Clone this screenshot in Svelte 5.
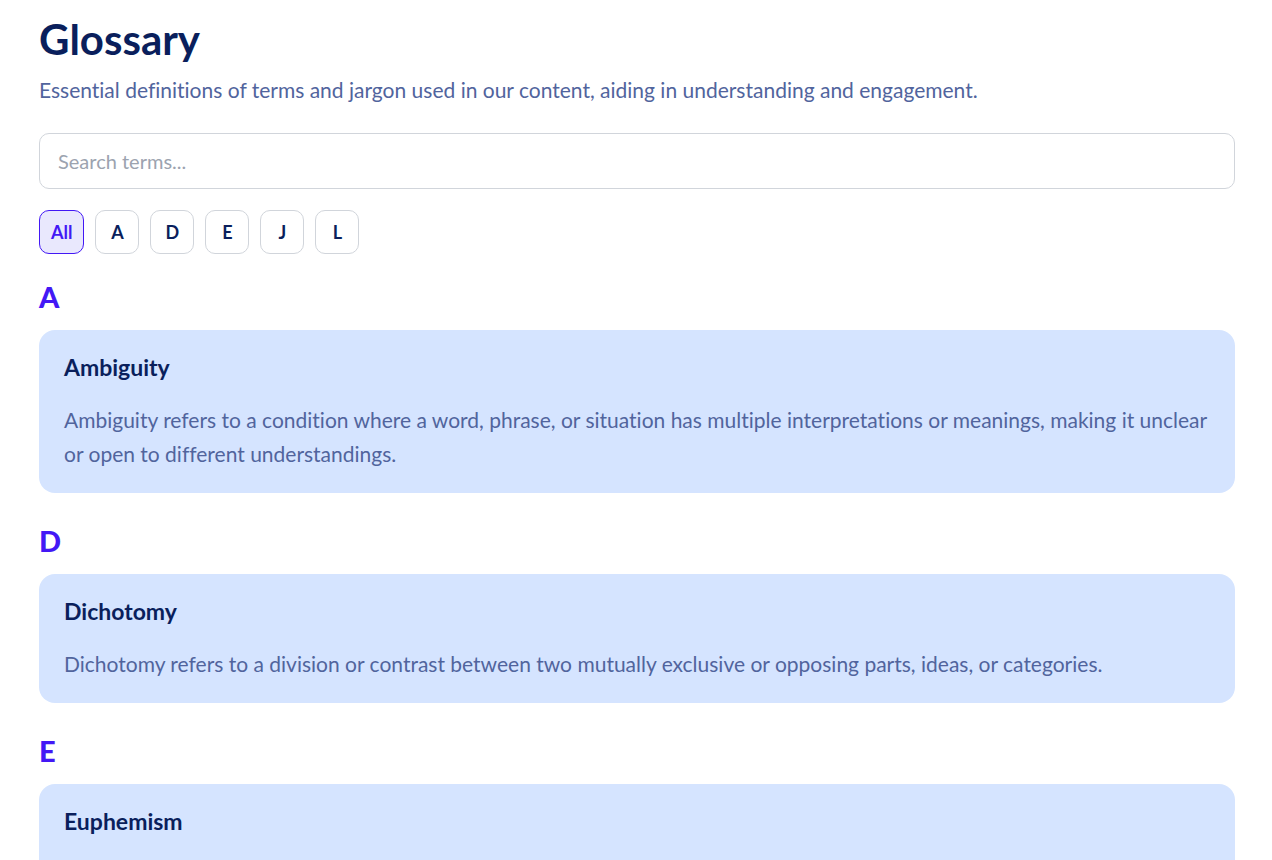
<script lang="ts">
  interface Term {
    name: string;
    definition: string;
  }

  const terms: Term[] = [
    {
      name: 'Ambiguity',
      definition:
        'Ambiguity refers to a condition where a word, phrase, or situation has multiple interpretations or meanings, making it unclear or open to different understandings.',
    },
    {
      name: 'Dichotomy',
      definition:
        'Dichotomy refers to a division or contrast between two mutually exclusive or opposing parts, ideas, or categories.',
    },
    { name: 'Euphemism', definition: '' },
  ];

  const letters = ['All', 'A', 'D', 'E', 'J', 'L'];

  let search = $state('');
  let active = $state('All');

  const groups = $derived(
    letters
      .slice(1)
      .filter((letter) => active === 'All' || active === letter)
      .map((letter) => ({
        letter,
        terms: terms.filter(
          (term) => term.name[0] === letter && term.name.toLowerCase().includes(search.trim().toLowerCase())
        ),
      }))
      .filter((group) => group.terms.length > 0)
  );
</script>

<main class="glossary">
  <h1>Glossary</h1>
  <p class="intro">Essential definitions of terms and jargon used in our content, aiding in understanding and engagement.</p>

  <input class="search" type="search" placeholder="Search terms..." aria-label="Search terms" bind:value={search} />

  <div class="filters">
    {#each letters as letter}
      <button type="button" class:active={active === letter} aria-pressed={active === letter} onclick={() => (active = letter)}>
        {letter}
      </button>
    {/each}
  </div>

  {#each groups as group (group.letter)}
    <section>
      <h2>{group.letter}</h2>
      {#each group.terms as term}
        <article class="card">
          <h3>{term.name}</h3>
          <p>{term.definition}</p>
        </article>
      {/each}
    </section>
  {/each}
</main>

<style>
  :global(html) { overflow: hidden; }

  :global(body) {
    margin: 0;
    height: 100vh;
    overflow: auto;
    scrollbar-width: none;
    background: #fff;
  }

  .glossary {
    padding: 11px 37px 40px 39px;
    font-family: Lato, sans-serif;
    font-variant-ligatures: none;
    color: #0a1f5c;
  }

  h1, h2, h3, p { margin: 0; }

  h1 {
    font-size: 42px;
    line-height: 56px;
    font-weight: 700;
  }

  .intro {
    margin-top: 6px;
    font-size: 21px;
    line-height: 34px;
    color: #51649d;
  }

  .search {
    display: block;
    box-sizing: border-box;
    width: 100%;
    height: 56px;
    margin-top: 26px;
    padding: 0 18px;
    border: 1px solid #d1d5db;
    border-radius: 10px;
    background: #fff;
    font: inherit;
    font-size: 20px;
    color: inherit;
    appearance: none;
  }
  .search::placeholder { color: #9ca3af; opacity: 1; }

  .filters {
    display: flex;
    flex-wrap: wrap;
    gap: 11px;
    margin-top: 21px;
  }

  .filters button {
    box-sizing: border-box;
    min-width: 44px;
    height: 44px;
    padding: 0 11px;
    border: 1px solid #d1d5db;
    border-radius: 10px;
    background: #fff;
    font: inherit;
    font-size: 18px;
    font-weight: 700;
    color: inherit;
    cursor: pointer;
  }
  .filters button.active {
    border-color: #4318f5;
    background: #e9e8fd;
    color: #4318f5;
  }

  section { margin-top: 25px; }
  section + section { margin-top: 30px; }

  h2 {
    font-size: 29px;
    line-height: 36px;
    font-weight: 900;
    color: #4318f5;
  }

  .card {
    margin-top: 15px;
    padding: 20px 24px 22px 25px;
    border-radius: 16px;
    background: #d5e4ff;
  }

  h3 {
    font-size: 23px;
    line-height: 34px;
    font-weight: 700;
  }

  .card p {
    min-height: 34px;
    margin-top: 19px;
    font-size: 21px;
    line-height: 34px;
    color: #51649d;
  }
</style>
